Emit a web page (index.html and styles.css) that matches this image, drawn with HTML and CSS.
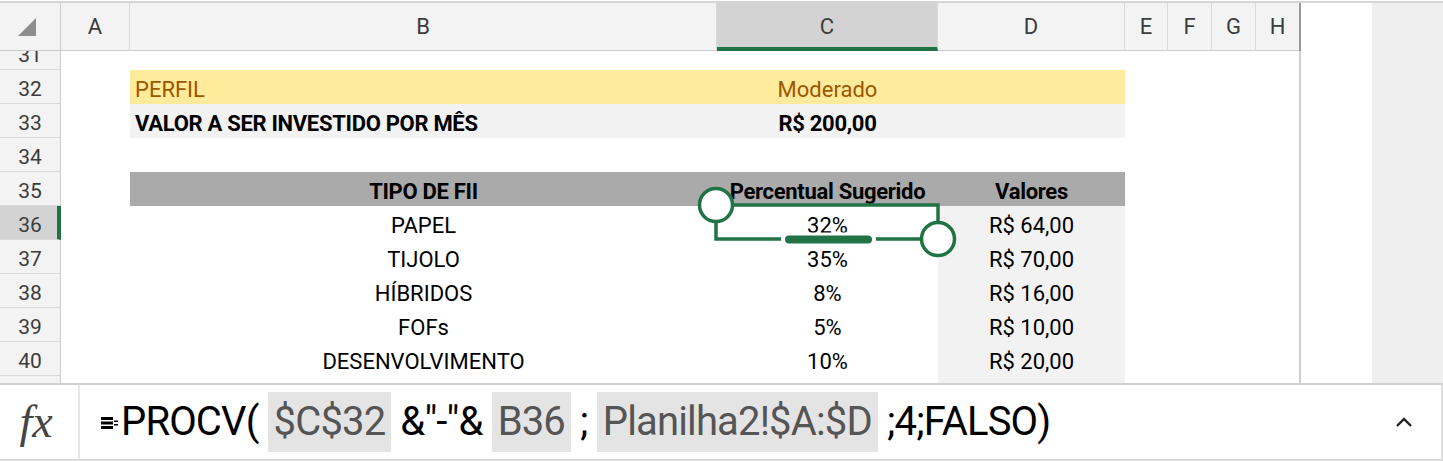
FILE: index.html
```html
<!DOCTYPE html>
<html lang="pt-BR">
<head>
<meta charset="utf-8">
<title>Planilha</title>
<link rel="stylesheet" href="styles.css">
</head>
<body>
<div class="app">
  <div class="top">
    <div class="sheet">
      <div class="colhead">
        <div class="hc corner"><span class="tri"></span></div>
        <div class="hc">A</div>
        <div class="hc">B</div>
        <div class="hc sel">C</div>
        <div class="hc">D</div>
        <div class="hc">E</div>
        <div class="hc">F</div>
        <div class="hc">G</div>
        <div class="hc last">H</div>
      </div>
      <div class="body">
        <div class="row r31"><div class="rh">31</div></div>
        <div class="row"><div class="rh">32</div><div></div><div class="c y left">PERFIL</div><div class="c y">Moderado</div><div class="c y"></div></div>
        <div class="row"><div class="rh">33</div><div></div><div class="c g left bold">VALOR A SER INVESTIDO POR MÊS</div><div class="c g bold">R$ 200,00</div><div class="c g"></div></div>
        <div class="row"><div class="rh">34</div></div>
        <div class="row"><div class="rh">35</div><div></div><div class="c h bold">TIPO DE FII</div><div class="c h bold">Percentual Sugerido</div><div class="c h bold">Valores</div></div>
        <div class="row"><div class="rh active">36</div><div></div><div class="c">PAPEL</div><div class="c">32%</div><div class="c g">R$ 64,00</div></div>
        <div class="row"><div class="rh">37</div><div></div><div class="c">TIJOLO</div><div class="c">35%</div><div class="c g">R$ 70,00</div></div>
        <div class="row"><div class="rh">38</div><div></div><div class="c">HÍBRIDOS</div><div class="c">8%</div><div class="c g">R$ 16,00</div></div>
        <div class="row"><div class="rh">39</div><div></div><div class="c">FOFs</div><div class="c">5%</div><div class="c g">R$ 10,00</div></div>
        <div class="row"><div class="rh">40</div><div></div><div class="c">DESENVOLVIMENTO</div><div class="c">10%</div><div class="c g">R$ 20,00</div></div>
        <div class="row"><div class="rh">41</div><div></div><div class="c"></div><div class="c"></div><div class="c g"></div></div>
      </div>
      <svg class="selection" width="280" height="90" viewBox="0 0 280 90">
        <path d="M26 30 H248 V64 H26 Z" fill="none" stroke="#217346" stroke-width="3.5"/>
        <rect x="91" y="57.5" width="95" height="14" rx="7" fill="#ffffff"/>
        <rect x="95" y="60.5" width="87" height="8" rx="4" fill="#217346"/>
        <circle cx="26" cy="30" r="16.5" fill="#ffffff" stroke="#217346" stroke-width="3.5"/>
        <circle cx="248" cy="64" r="16.5" fill="#ffffff" stroke="#217346" stroke-width="3.5"/>
      </svg>
    </div>
    <div class="blank"></div>
    <div class="gutter"></div>
  </div>
  <div class="fbar">
    <div class="fx">fx</div>
    <div class="formula">
      <svg class="eq" width="18" height="12" viewBox="0 0 18 12">
        <rect x="0" y="0" width="12" height="3" fill="#000"/>
        <rect x="0" y="4.5" width="12" height="3" fill="#000"/>
        <rect x="0" y="9" width="12" height="3" fill="#000"/>
        <rect x="13" y="3.5" width="4" height="1.5" fill="#000"/>
        <rect x="13" y="7" width="4" height="1.5" fill="#000"/>
      </svg><span class="ftxt">PROCV( <span class="ref">$C$32</span> &amp;"-"&amp; <span class="ref">B36</span> ; <span class="ref">Planilha2!$A:$D</span> ;4;FALSO)</span>
    </div>
    <svg class="chev" width="18" height="12" viewBox="0 0 18 12">
      <path d="M2 10 L9 3 L16 10" fill="none" stroke="#222" stroke-width="2.4"/>
    </svg>
  </div>
</div>
</body>
</html>
```

FILE: styles.css
```css
* { box-sizing: border-box; }
html, body { margin: 0; padding: 0; background: #ffffff; }
body { width: 1443px; height: 461px; overflow: hidden; font-family: Roboto, "Liberation Sans", sans-serif; }

.app { width: 1443px; height: 461px; padding-top: 1px; display: flex; flex-direction: column; }

.top { display: flex; height: 382px; border-top: 2px solid #d6d6d6; }
.sheet { position: relative; width: 1301px; flex: none; }
.blank { width: 71px; flex: none; background: #ffffff; }
.gutter { flex: 1; background: #efefef; }

.colhead, .row {
  display: grid;
  grid-template-columns: 61px 69px 587px 221px 187px 43px 44px 44px 43px;
}
.colhead { height: 48px; border-right: 2px solid #9a9a9a; }
.hc {
  height: 48px;
  background: #f3f3f3;
  border-right: 1px solid #d9d9d9;
  border-bottom: 1px solid #cdcdcd;
  text-align: center;
  line-height: 47px;
  font-size: 22px;
  color: #3c3c3c;
}
.hc.last { border-right: none; }
.hc.sel { background: #d3d3d3; border-bottom: 4px solid #217346; }
.hc.corner {
  display: flex;
  justify-content: flex-end;
  align-items: flex-end;
  padding: 0 24px 14px 0;
  border-right-color: #cdcdcd;
}
.tri {
  width: 0; height: 0;
  border-left: 18px solid transparent;
  border-bottom: 18px solid #8e8e8e;
}

.body { height: 332px; overflow: hidden; border-right: 2px solid #cfcfcf; }
.row { height: 34px; }
.r31 { margin-top: -15px; }
.rh {
  height: 34px;
  background: #f3f3f3;
  border-right: 1px solid #cdcdcd;
  border-bottom: 1px solid #dadada;
  text-align: center;
  line-height: 34px;
  padding-top: 2px;
  font-size: 21px;
  color: #3c3c3c;
}
.rh.active { background: #d3d3d3; border-right: 4px solid #217346; padding-left: 3px; }

.c {
  height: 34px;
  display: flex;
  align-items: flex-end;
  justify-content: center;
  line-height: 28px;
  font-size: 22px;
  color: #000;
  white-space: nowrap;
}
.c.left { justify-content: flex-start; padding-left: 5px; }
.c.bold { font-weight: 700; letter-spacing: -0.3px; }
.c.y { background: #ffeb9c; color: #9c5700; }
.c.g { background: #f2f2f2; }
.c.h { background: #aaaaaa; }

.selection { position: absolute; left: 690px; top: 172px; }

.fbar {
  height: 78px;
  display: flex;
  align-items: center;
  border-top: 2px solid #d0d0d0;
  border-right: 2px solid #dedede;
  border-bottom: 2px solid #dcdcdc;
}
.fx {
  width: 80px;
  height: 100%;
  border-right: 2px solid #e6e6e6;
  display: flex;
  align-items: center;
  justify-content: center;
  padding-right: 6px;
  padding-bottom: 2px;
  font-family: "Liberation Serif", "DejaVu Serif", serif;
  font-style: italic;
  font-size: 46px;
  color: #444444;
}
.formula {
  flex: 1;
  display: flex;
  align-items: center;
  padding-left: 21px;
}
.eq { margin-right: 2px; margin-top: 2px; }
.ftxt {
  font-family: Roboto, "Liberation Sans", sans-serif;
  font-size: 40px;
  letter-spacing: -0.85px;
  color: #000;
  white-space: pre;
  line-height: 60px;
}
.ref { background: #e4e4e4; color: #555555; padding: 0 6px; display: inline-block; height: 60px; }
.chev { margin-right: 28px; }
```
